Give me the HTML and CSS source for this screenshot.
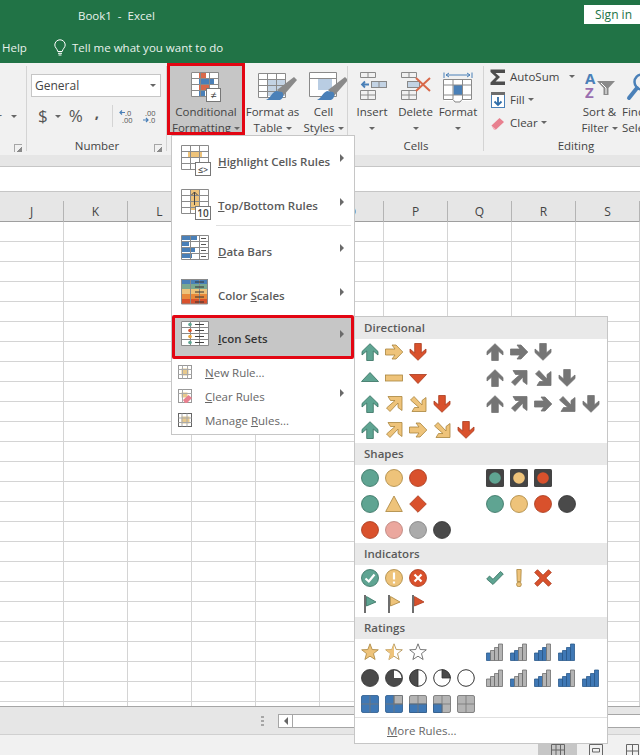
FILE: index.html
```html
<!DOCTYPE html>
<html lang="en">
<head>
<meta charset="utf-8">
<title>Book1 - Excel</title>
<link rel="stylesheet" href="styles.css">
</head>
<body>
<svg class="defs" aria-hidden="true">
  <symbol id="up" viewBox="0 0 18 18"><path d="M9 .7 17 8.500V12L12.300 8V17.500H5.700V8L1 12V8.500Z"/></symbol>
  <symbol id="right" viewBox="0 0 18 18"><path d="M.5 6H10L7 2H11L17.800 9 11 16H7L10 12H.5Z"/></symbol>
  <symbol id="ne" viewBox="0 0 18 18"><path d="M3 1.500H17V15.500L13 12.500V8L5 16.500 1.500 13 10 5.500H5.500Z"/></symbol>
  <symbol id="se" viewBox="0 0 18 18"><path d="M3 16.500H17V2.500L13 5.500V10L5 1.500 1.500 5 10 12.500H5.500Z"/></symbol>
  <symbol id="tri-up" viewBox="0 0 18 18"><path d="M9 3.500 17.500 12.500H.5Z"/></symbol>
  <symbol id="tri-dn" viewBox="0 0 18 18"><path d="M.5 5.500H17.500L9 14.500Z"/></symbol>
  <symbol id="dash" viewBox="0 0 18 18"><rect x=".5" y="6" width="17" height="6"/></symbol>
  <symbol id="circ" viewBox="0 0 18 18"><circle cx="9" cy="9" r="8.500"/></symbol>
  <symbol id="tri" viewBox="0 0 18 18"><path d="M9 1 17.300 16.500H.7Z"/></symbol>
  <symbol id="dia" viewBox="0 0 18 18"><path d="M9 .7 17.300 9 9 17.300 .7 9Z"/></symbol>
  <symbol id="light" viewBox="0 0 18 18"><rect width="18" height="18" rx="1.500" class="k-dark"/><circle cx="9" cy="9" r="5.800"/></symbol>
  <symbol id="ok" viewBox="0 0 18 18"><circle cx="9" cy="9" r="8.500"/><path d="M4.500 9.500 7.800 12.500 13.500 5.500" class="k-mark"/></symbol>
  <symbol id="bang" viewBox="0 0 18 18"><circle cx="9" cy="9" r="8.500"/><path d="M9 3.500V10.500M9 12.500V14.500" class="k-mark"/></symbol>
  <symbol id="no" viewBox="0 0 18 18"><circle cx="9" cy="9" r="8.500"/><path d="M5.500 5.500 12.500 12.500M12.500 5.500 5.500 12.500" class="k-mark"/></symbol>
  <symbol id="check" viewBox="0 0 18 18"><path d="M.7 10 3.500 7 7 10.300 14.500 2.500 17.300 5 7 15.500Z"/></symbol>
  <symbol id="excl" viewBox="0 0 18 18"><path d="M6.800 .5H11.200L10.800 12.500H7.200ZM9 13A2.400 2.400 0 1 1 8.900 17.800 2.400 2.400 0 0 1 9 13Z"/></symbol>
  <symbol id="cross" viewBox="0 0 18 18"><path d="M3.500.7 9 6.200 14.500.7 17.300 3.500 11.800 9 17.300 14.500 14.500 17.300 9 11.800 3.500 17.300.7 14.500 6.200 9 .7 3.500Z"/></symbol>
  <symbol id="flag" viewBox="0 0 18 18"><rect x="3" y="0" width="2" height="18" class="k-pole"/><path d="M5.500 1.500 15 7 5.500 11Z"/></symbol>
  <symbol id="star" viewBox="0 0 18 18"><path d="M9 .8 11.200 6.500 17.300 6.800 12.500 10.600 14.100 16.500 9 13.200 3.900 16.500 5.500 10.600 .7 6.800 6.800 6.500Z"/></symbol>
  <symbol id="star-h" viewBox="0 0 18 18"><path class="k-white" d="M9 .8 11.200 6.500 17.300 6.800 12.500 10.600 14.100 16.500 9 13.200 3.900 16.500 5.500 10.600 .7 6.800 6.800 6.500Z"/><path class="k-noline" d="M9 .8 6.800 6.500 .7 6.800 5.500 10.600 3.900 16.500 9 13.200Z"/></symbol>
  <symbol id="p4" viewBox="0 0 18 18"><circle cx="9" cy="9" r="8.500" class="k-pie"/></symbol>
  <symbol id="p3" viewBox="0 0 18 18"><circle cx="9" cy="9" r="8.500" class="k-pie"/><path d="M9 9V1.500A7.500 7.500 0 0 1 16.500 9Z" class="k-whitefill"/></symbol>
  <symbol id="p2" viewBox="0 0 18 18"><circle cx="9" cy="9" r="8.300" class="k-ring"/><path d="M9 .7A8.300 8.300 0 0 0 9 17.300Z" class="k-pie"/></symbol>
  <symbol id="p1" viewBox="0 0 18 18"><circle cx="9" cy="9" r="8.300" class="k-ring"/><path d="M9 9V.7A8.300 8.300 0 0 1 17.300 9Z" class="k-pie"/></symbol>
  <symbol id="p0" viewBox="0 0 18 18"><circle cx="9" cy="9" r="8.300" class="k-ring"/></symbol>
  <symbol id="b0" viewBox="0 0 18 18"><path class="k-off" d="M.5 10H4.500V17.500H.5ZM4.500 7.500H8.500V17.500H4.500ZM8.500 4.500H12.500V17.500H8.500ZM12.500 1H16.500V17.500H12.500Z"/></symbol>
  <symbol id="b1" viewBox="0 0 18 18"><path class="k-on" d="M.5 10H4.500V17.500H.5Z"/><path class="k-off" d="M4.500 7.500H8.500V17.500H4.500ZM8.500 4.500H12.500V17.500H8.500ZM12.500 1H16.500V17.500H12.500Z"/></symbol>
  <symbol id="b2" viewBox="0 0 18 18"><path class="k-on" d="M.5 10H4.500V17.500H.5ZM4.500 7.500H8.500V17.500H4.500Z"/><path class="k-off" d="M8.500 4.500H12.500V17.500H8.500ZM12.500 1H16.500V17.500H12.500Z"/></symbol>
  <symbol id="b3" viewBox="0 0 18 18"><path class="k-on" d="M.5 10H4.500V17.500H.5ZM4.500 7.500H8.500V17.500H4.500ZM8.500 4.500H12.500V17.500H8.500Z"/><path class="k-off" d="M12.500 1H16.500V17.500H12.500Z"/></symbol>
  <symbol id="b4" viewBox="0 0 18 18"><path class="k-on" d="M.5 10H4.500V17.500H.5ZM4.500 7.500H8.500V17.500H4.500ZM8.500 4.500H12.500V17.500H8.500ZM12.500 1H16.500V17.500H12.500Z"/></symbol>
  <symbol id="q4" viewBox="0 0 18 18"><rect x=".5" y=".5" width="17" height="17" rx="1.500" class="k-on"/><path d="M9 .5V17.500M.5 9H17.500" class="k-qline"/></symbol>
  <symbol id="q3" viewBox="0 0 18 18"><rect x=".5" y=".5" width="17" height="17" rx="1.500" class="k-on"/><path d="M9 .5H17.500V9H9Z" class="k-offf"/><path d="M9 .5V17.500M.5 9H17.500" class="k-qline"/></symbol>
  <symbol id="q2" viewBox="0 0 18 18"><rect x=".5" y=".5" width="17" height="17" rx="1.500" class="k-offf"/><path d="M.5 9H17.500V17.500H.5Z" class="k-on"/><path d="M9 .5V17.500M.5 9H17.500" class="k-qline"/></symbol>
  <symbol id="q1" viewBox="0 0 18 18"><rect x=".5" y=".5" width="17" height="17" rx="1.500" class="k-offf"/><path d="M.5 9H9V17.500H.5Z" class="k-on"/><path d="M9 .5V17.500M.5 9H17.500" class="k-qline"/></symbol>
  <symbol id="q0" viewBox="0 0 18 18"><rect x=".5" y=".5" width="17" height="17" rx="1.500" class="k-offf"/><path d="M9 .5V17.500M.5 9H17.500" class="k-qline"/></symbol>
  <symbol id="grid" viewBox="0 0 30 32"><path class="k-grid" d="M.5.5H27.500V24.500H.5ZM9.500.5V24.500M18.500.5V24.500M.5 6.500H27.500M.5 12.500H27.500M.5 18.500H27.500"/></symbol>
  <symbol id="brush" viewBox="0 0 42 32"><path d="M19 18 36 5 39 8 25 24Z" fill="#8a8a8a"/><path d="M18 19C13 21 13 26 8 28H22C26 26 26 22 24 20Z" fill="#4a80b8"/></symbol>
</svg>

<div class="app">
  <header class="titlebar">
    <div class="title-row">
      <span class="doc-title">Book1 &nbsp;-&nbsp; Excel</span>
      <span class="signin">Sign in</span>
    </div>
    <div class="tell-row">
      <span class="help">Help</span>
      <svg class="bulb" viewBox="0 0 12 17"><path d="M6 .8A5.200 5.200 0 0 0 .8 6C.8 8.500 3.300 9.800 3.800 12.500H8.200C8.700 9.800 11.200 8.500 11.200 6A5.200 5.200 0 0 0 6 .8ZM4 14.300H8M4.500 16H7.500" fill="none" stroke="#fff"/></svg>
      <span class="tell">Tell me what you want to do</span>
    </div>
  </header>

  <section class="ribbon">
    <div class="group g-stub">
      <div class="stub-row"><span class="stub-r">r</span><i class="caret"></i></div>
      <i class="launcher"></i>
    </div>

    <div class="group g-number">
      <div class="combo"><span>General</span><i class="caret"></i></div>
      <div class="num-row">
        <span class="sym dollar">$</span><i class="caret"></i>
        <span class="sym pct">%</span>
        <span class="sym comma">,</span>
        <span class="num-sep"></span>
        <svg class="dec" viewBox="0 0 16 16"><text x="6" y="7.500" class="dec-t">.0</text><text x="3" y="15" class="dec-t">.00</text><path d="M1 4.500H6M3 2.500 1 4.500 3 6.500" class="dec-a"/></svg>
        <svg class="dec" viewBox="0 0 16 16"><text x="3" y="7.500" class="dec-t">.00</text><text x="7" y="15" class="dec-t">.0</text><path d="M1 12H6M4 10 6 12 4 14" class="dec-a"/></svg>
      </div>
      <div class="group-label">Number</div>
      <i class="launcher"></i>
    </div>

    <div class="group g-styles">
      <div class="cmd cmd-cf">
        <svg class="cmd-ic" viewBox="0 0 30 32">
          <rect x="0" y="0" width="27" height="24" fill="#fff"/>
          <rect x="8" y="0" width="7" height="6" fill="#d9694a"/><rect x="8" y="6" width="15" height="6" fill="#4a80b8"/><rect x="8" y="12" width="11" height="6" fill="#d9694a"/><rect x="8" y="18" width="6" height="6" fill="#4a80b8"/>
          <use href="#grid"/>
          <rect x="15.500" y="16.500" width="14" height="13" fill="#fff" stroke="#777"/>
          <text x="22.500" y="27" class="badge-t">≠</text>
        </svg>
        <span>Conditional</span>
        <span>Formatting<i class="caret c-in"></i></span>
      </div>
      <div class="cmd cmd-fat">
        <svg class="cmd-ic wide" viewBox="0 0 42 32">
          <rect x="0" y="1" width="27" height="24" fill="#fff"/>
          <rect x="9" y="7" width="18" height="17" fill="#c3d3e4"/>
          <path class="k-grid" d="M.5 1.500H27.500V25.500H.5ZM9.500 1.500V25.500M18.500 1.500V25.500M.5 7.500H27.500M.5 13.500H27.500M.5 19.500H27.500"/>
          <use href="#brush" x="0" y="0" width="42" height="32"/>
        </svg>
        <span>Format as</span>
        <span>Table<i class="caret c-in"></i></span>
      </div>
      <div class="cmd cmd-cs">
        <svg class="cmd-ic wide" viewBox="0 0 42 32">
          <rect x="0" y="0" width="27" height="24" fill="#fff"/>
          <rect x="9" y="6" width="14" height="12" fill="#b9cde3"/>
          <path class="k-grid" d="M.5.5H27.500V24.500H.5ZM.5 6.500H27.500"/>
          <use href="#brush" x="0" y="0" width="42" height="32"/>
        </svg>
        <span>Cell</span>
        <span>Styles<i class="caret c-in"></i></span>
      </div>
    </div>

    <div class="group g-cells">
      <div class="cmd-row">
        <div class="cmd cmd-ins">
          <svg class="cmd-ic" viewBox="0 0 30 32">
            <path class="k-grid" d="M.5 .5H15.500V5.500H.5ZM8 .5V5.500M.5 18.500H15.500V27.500H.5ZM8 18.500V27.500M.5 23H15.500"/>
            <rect x="11.500" y="9.500" width="15" height="6" fill="#c3d3e4" stroke="#888"/>
            <path d="M19 9.500V15.500" stroke="#888"/>
            <path d="M2 12.500H9M5 9.500 2 12.500 5 15.500" fill="none" stroke="#4a80b8" stroke-width="1.800"/>
          </svg>
          <span>Insert</span>
          <span class="caret-line"><i class="caret"></i></span>
        </div>
        <div class="cmd cmd-del">
          <svg class="cmd-ic" viewBox="0 0 30 32">
            <path class="k-grid" d="M.5 .5H15.500V5.500H.5ZM8 .5V5.500M.5 18.500H15.500V27.500H.5ZM8 18.500V27.500M.5 23H15.500"/>
            <rect x="6.500" y="9.500" width="12" height="6" fill="#c3d3e4" stroke="#888"/>
            <path d="M15 6 29 19M29 6 15 19" stroke="#d9694a" stroke-width="2" fill="none"/>
          </svg>
          <span>Delete</span>
          <span class="caret-line"><i class="caret"></i></span>
        </div>
        <div class="cmd cmd-fmt">
          <svg class="cmd-ic" viewBox="0 0 30 32">
            <path d="M1 .5V6M29 .5V6M3 3H27M6 1 3 3 6 5M24 1 27 3 24 5" fill="none" stroke="#4a80b8"/>
            <rect x="1" y="8" width="28" height="21" fill="#fff"/>
            <rect x="10.500" y="13" width="9" height="10" fill="#4a80b8"/>
            <path class="k-grid" d="M.5 7.500H28.500V27.500L19 27.500 17 30H12L10 27.500H.5ZM10 7.500V27M19.500 7.500V27M.5 13H28.500M.5 23H28.500"/>
          </svg>
          <span>Format</span>
          <span class="caret-line"><i class="caret"></i></span>
        </div>
      </div>
      <div class="group-label">Cells</div>
    </div>

    <div class="group g-edit">
      <div class="cmd-row">
        <div class="edit-list">
          <div class="edit-row e-sum">
            <svg class="e-ic" viewBox="0 0 16 16"><path d="M.5.500H15V4H5.500L10 8 5.500 12.500H15V16H.5V13.500L6 8 .5 3Z" fill="#4d4d4d"/></svg>
            <span>AutoSum</span><i class="caret c-far"></i>
          </div>
          <div class="edit-row">
            <svg class="e-ic" viewBox="0 0 16 16"><rect x="1.500" y=".5" width="13" height="15" fill="#fff" stroke="#4a80b8"/><rect x="1" y="0" width="14" height="3" fill="#6d6d6d"/><path d="M8 5V13M4.500 9.500 8 13 11.500 9.500" fill="none" stroke="#2e6ca8" stroke-width="1.800"/></svg>
            <span>Fill</span><i class="caret c-in"></i>
          </div>
          <div class="edit-row">
            <svg class="e-ic" viewBox="0 0 16 16"><path d="M1.500 10.500 9.500 3 14 7 6 14.500H4Z" fill="#e8808f"/><path d="M1.500 10.500 6 14.500H4Z" fill="#f5c0c8"/></svg>
            <span>Clear</span><i class="caret c-in"></i>
          </div>
        </div>
        <div class="cmd cmd-sort">
          <svg class="cmd-ic" viewBox="0 0 30 32">
            <text x="0" y="12" class="az az-a">A</text>
            <text x="0" y="26" class="az az-z">Z</text>
            <path d="M12 9H30L23.500 16V23H18.500V16Z" fill="#8a8a8a"/><path d="M16 11 21 16V22" fill="none" stroke="#fff"/>
          </svg>
          <span>Sort &amp;</span>
          <span>Filter<i class="caret c-in"></i></span>
        </div>
        <div class="cmd cmd-find">
          <svg class="cmd-ic" viewBox="0 0 30 32">
            <circle cx="20" cy="10" r="7.500" fill="none" stroke="#4a80b8" stroke-width="2.500"/>
            <path d="M15 16 7 26" stroke="#4a80b8" stroke-width="4" stroke-linecap="round"/>
          </svg>
          <span>Find &amp;</span>
          <span>Select</span>
        </div>
      </div>
      <div class="group-label">Editing</div>
    </div>
  </section>

  <div class="ribbon-gap"></div>
  <div class="formula"></div>

  <div class="colhead">
    <div class="col">J</div><div class="col">K</div><div class="col">L</div><div class="col"></div><div class="col"></div><div class="col">O</div><div class="col">P</div><div class="col">Q</div><div class="col">R</div><div class="col">S</div>
  </div>
  <div class="sheet"></div>

  <div class="hscroll">
    <span class="grip"></span>
    <span class="scroll-btn"><i class="tri-left"></i></span>
    <span class="scroll-track"></span>
  </div>
  <footer class="status">
    <span class="view view-on"><svg class="view-ic" viewBox="0 0 14 12"><path d="M.5.500H13.500V11.500H.5ZM5 .5V11.500M9.500 .5V11.500M.5 6H13.500" fill="none" stroke="#666"/></svg></span>
    <span class="view view-page"><svg class="view-ic" viewBox="0 0 14 12"><path d="M.5.500H13.500V11.500H.5ZM3.500 4.500H10.500V8H3.500Z" fill="none" stroke="#666"/></svg></span>
    <span class="view view-brk"><svg class="view-ic" viewBox="0 0 14 12"><path d="M.5.500H12.500V11.500H.5ZM6.500 .5V11.500M.5 7H12.500" fill="none" stroke="#666"/></svg></span>
  </footer>

  <nav class="menu">
    <div class="mi-lg">
      <svg class="mi-ic" viewBox="0 0 30 32"><rect width="27" height="24" fill="#fff"/><rect x="7" y="6" width="14" height="6" fill="#eec37a"/><use href="#grid"/><rect x="14.500" y="17.500" width="15" height="13" fill="#fff" stroke="#777"/><text x="22" y="27.500" class="badge-s">≤&gt;</text></svg>
      <span class="mi-t"><u>H</u>ighlight Cells Rules</span><i class="sub-arrow"></i>
    </div>
    <div class="mi-lg">
      <svg class="mi-ic" viewBox="0 0 30 32"><rect width="27" height="24" fill="#fff"/><rect x="9" y="0" width="9" height="21" fill="#eec37a"/><use href="#grid"/><path d="M13.500 16V3M10.500 6 13.500 3 16.500 6" fill="none" stroke="#444"/><rect x="14.500" y="17.500" width="15" height="13" fill="#fff" stroke="#777"/><text x="22" y="28" class="badge-n">10</text></svg>
      <span class="mi-t"><u>T</u>op/Bottom Rules</span><i class="sub-arrow"></i>
    </div>
    <div class="mi-sep"></div>
    <div class="mi-lg">
      <svg class="mi-ic" viewBox="0 0 30 32"><rect width="27" height="24" fill="#fff"/><rect x="0" y="1" width="16" height="4" fill="#4a80b8"/><rect x="0" y="6" width="8" height="5" fill="#4a80b8"/><rect x="0" y="12" width="14" height="5" fill="#4a80b8"/><rect x="0" y="18" width="11" height="5" fill="#4a80b8"/><use href="#grid"/><path d="M20 3.500H25M20 9.500H25M20 15.500H25M20 21.500H25" stroke="#555"/></svg>
      <span class="mi-t"><u>D</u>ata Bars</span><i class="sub-arrow"></i>
    </div>
    <div class="mi-lg">
      <svg class="mi-ic" viewBox="0 0 30 32"><rect y="0" width="27" height="5" fill="#4a80b8"/><rect y="5" width="27" height="5" fill="#7aa890"/><rect y="10" width="27" height="5" fill="#eec37a"/><rect y="15" width="27" height="5" fill="#e8883a"/><rect y="20" width="27" height="5" fill="#d9512c"/><path class="k-grid" d="M.5.500H26.500V25H.5ZM9.500.5V25M18.500.5V25"/><path d="M14 3H23M14 8H23M14 13H23M14 18H23M14 23H23" stroke="#333"/></svg>
      <span class="mi-t">Color <u>S</u>cales</span><i class="sub-arrow"></i>
    </div>
    <div class="mi-lg mi-on">
      <svg class="mi-ic" viewBox="0 0 30 32"><rect width="27" height="24" fill="#fff"/><use href="#grid"/><circle cx="9" cy="3.500" r="1.800" fill="#5fa492"/><circle cx="9" cy="9.500" r="1.800" fill="#d9512c"/><circle cx="9" cy="15.500" r="1.800" fill="#e8a53a"/><circle cx="9" cy="21.500" r="1.800" fill="#5fa492"/><path d="M14 3.500H23M14 9.500H23M14 15.500H23M14 21.500H23" stroke="#444"/></svg>
      <span class="mi-t"><u>I</u>con Sets</span><i class="sub-arrow"></i>
    </div>
    <div class="mi-sm">
      <svg class="mi-ic-s" viewBox="0 0 14 14"><rect x=".5" y=".5" width="13" height="13" fill="#fff" stroke="#999"/><rect x="3.500" y="3.500" width="7" height="7" fill="#e8c98c"/><path d="M.5 4.500H13.500M.5 9.500H13.500M4.500 .5V13.500M9.500 .5V13.500" stroke="#aaa" fill="none"/></svg>
      <span><u>N</u>ew Rule...</span>
    </div>
    <div class="mi-sm">
      <svg class="mi-ic-s" viewBox="0 0 14 14"><rect x=".5" y=".5" width="13" height="13" fill="#fff" stroke="#999"/><rect x="3.500" y="3.500" width="6" height="5" fill="#e8c98c"/><path d="M.5 4.500H13.500M4.500 .5V13.500" stroke="#aaa" fill="none"/><path d="M5 11 10.500 6 14 9 9 14H7Z" fill="#e8808f"/></svg>
      <span><u>C</u>lear Rules</span><i class="sub-arrow"></i>
    </div>
    <div class="mi-sm">
      <svg class="mi-ic-s" viewBox="0 0 14 14"><rect x=".5" y=".5" width="13" height="13" fill="#fff" stroke="#666"/><rect x="3.500" y="3.500" width="8" height="7" fill="#e8c98c"/><path d="M.5 5H13.500M.5 9.500H13.500M4 .5V13.500M9 .5V13.500" stroke="#aaa" fill="none"/></svg>
      <span>Manage <u>R</u>ules...</span>
    </div>
  </nav>

  <aside class="iconsets">
    <h3 class="is-head">Directional</h3>
    <div class="is-row">
      <div class="is-set">
        <svg class="ic green"><use href="#up"/></svg><svg class="ic yellow"><use href="#right"/></svg><svg class="ic red flip"><use href="#up"/></svg>
      </div>
      <div class="is-set">
        <svg class="ic gray"><use href="#up"/></svg><svg class="ic gray"><use href="#right"/></svg><svg class="ic gray flip"><use href="#up"/></svg>
      </div>
    </div>
    <div class="is-row">
      <div class="is-set">
        <svg class="ic green"><use href="#tri-up"/></svg><svg class="ic yellow"><use href="#dash"/></svg><svg class="ic red"><use href="#tri-dn"/></svg>
      </div>
      <div class="is-set">
        <svg class="ic gray"><use href="#up"/></svg><svg class="ic gray"><use href="#ne"/></svg><svg class="ic gray"><use href="#se"/></svg><svg class="ic gray flip"><use href="#up"/></svg>
      </div>
    </div>
    <div class="is-row">
      <div class="is-set">
        <svg class="ic green"><use href="#up"/></svg><svg class="ic yellow"><use href="#ne"/></svg><svg class="ic yellow"><use href="#se"/></svg><svg class="ic red flip"><use href="#up"/></svg>
      </div>
      <div class="is-set">
        <svg class="ic gray"><use href="#up"/></svg><svg class="ic gray"><use href="#ne"/></svg><svg class="ic gray"><use href="#right"/></svg><svg class="ic gray"><use href="#se"/></svg><svg class="ic gray flip"><use href="#up"/></svg>
      </div>
    </div>
    <div class="is-row">
      <div class="is-set">
        <svg class="ic green"><use href="#up"/></svg><svg class="ic yellow"><use href="#ne"/></svg><svg class="ic yellow"><use href="#right"/></svg><svg class="ic yellow"><use href="#se"/></svg><svg class="ic red flip"><use href="#up"/></svg>
      </div>
    </div>

    <h3 class="is-head">Shapes</h3>
    <div class="is-row">
      <div class="is-set">
        <svg class="ic green"><use href="#circ"/></svg><svg class="ic yellow"><use href="#circ"/></svg><svg class="ic red"><use href="#circ"/></svg>
      </div>
      <div class="is-set">
        <svg class="ic lamp-g"><use href="#light"/></svg><svg class="ic lamp-y"><use href="#light"/></svg><svg class="ic lamp-r"><use href="#light"/></svg>
      </div>
    </div>
    <div class="is-row">
      <div class="is-set">
        <svg class="ic green"><use href="#circ"/></svg><svg class="ic yellow"><use href="#tri"/></svg><svg class="ic red"><use href="#dia"/></svg>
      </div>
      <div class="is-set">
        <svg class="ic green"><use href="#circ"/></svg><svg class="ic yellow"><use href="#circ"/></svg><svg class="ic red"><use href="#circ"/></svg><svg class="ic dark"><use href="#circ"/></svg>
      </div>
    </div>
    <div class="is-row">
      <div class="is-set">
        <svg class="ic red"><use href="#circ"/></svg><svg class="ic pink"><use href="#circ"/></svg><svg class="ic silver"><use href="#circ"/></svg><svg class="ic dark"><use href="#circ"/></svg>
      </div>
    </div>

    <h3 class="is-head">Indicators</h3>
    <div class="is-row">
      <div class="is-set">
        <svg class="ic green"><use href="#ok"/></svg><svg class="ic yellow"><use href="#bang"/></svg><svg class="ic red"><use href="#no"/></svg>
      </div>
      <div class="is-set">
        <svg class="ic green"><use href="#check"/></svg><svg class="ic yellow"><use href="#excl"/></svg><svg class="ic red"><use href="#cross"/></svg>
      </div>
    </div>
    <div class="is-row">
      <div class="is-set">
        <svg class="ic green"><use href="#flag"/></svg><svg class="ic yellow"><use href="#flag"/></svg><svg class="ic red"><use href="#flag"/></svg>
      </div>
    </div>

    <h3 class="is-head">Ratings</h3>
    <div class="is-row">
      <div class="is-set">
        <svg class="ic yellow"><use href="#star"/></svg><svg class="ic yellow"><use href="#star-h"/></svg><svg class="ic hollow"><use href="#star"/></svg>
      </div>
      <div class="is-set">
        <svg class="ic"><use href="#b1"/></svg><svg class="ic"><use href="#b2"/></svg><svg class="ic"><use href="#b3"/></svg><svg class="ic"><use href="#b4"/></svg>
      </div>
    </div>
    <div class="is-row">
      <div class="is-set">
        <svg class="ic"><use href="#p4"/></svg><svg class="ic"><use href="#p3"/></svg><svg class="ic"><use href="#p2"/></svg><svg class="ic"><use href="#p1"/></svg><svg class="ic"><use href="#p0"/></svg>
      </div>
      <div class="is-set">
        <svg class="ic"><use href="#b0"/></svg><svg class="ic"><use href="#b1"/></svg><svg class="ic"><use href="#b2"/></svg><svg class="ic"><use href="#b3"/></svg><svg class="ic"><use href="#b4"/></svg>
      </div>
    </div>
    <div class="is-row">
      <div class="is-set">
        <svg class="ic"><use href="#q4"/></svg><svg class="ic"><use href="#q3"/></svg><svg class="ic"><use href="#q2"/></svg><svg class="ic"><use href="#q1"/></svg><svg class="ic"><use href="#q0"/></svg>
      </div>
    </div>
    <div class="is-more"><span><u>M</u>ore Rules...</span></div>
  </aside>
</div>
</body>
</html>
```

FILE: styles.css
```css
* { box-sizing: border-box; }
html, body { margin: 0; padding: 0; }
body { font-family: "Open Sans", "Noto Sans", sans-serif; font-size: 11.5px; color: #444; background: #fff; }
.defs { position: absolute; width: 0; height: 0; overflow: hidden; }
.app { position: relative; width: 640px; height: 755px; overflow: hidden; display: flex; flex-direction: column; }
i { display: block; font-style: normal; }

/* title bar */
.titlebar { height: 63px; background: #217346; color: #e9f2ed; flex: none; }
.title-row { height: 31px; padding-left: 78px; display: flex; align-items: flex-start; justify-content: space-between; }
.doc-title { margin-top: 8px; line-height: 16px; }
.signin { width: 56px; height: 19px; margin-top: 5px; background: #fff; color: #217346; line-height: 19px; padding-left: 11px; font-size: 12px; }
.tell-row { height: 32px; display: flex; align-items: center; padding-left: 2px; }
.help { width: 52px; }
.bulb { width: 12px; height: 17px; margin-right: 6px; }

/* ribbon */
.ribbon { height: 92px; flex: none; display: flex; background: #f1f1f1; overflow: hidden; }
.group { position: relative; flex: none; height: 100%; }
.group::after { content: ""; position: absolute; right: 0; top: 3px; height: 85px; width: 1px; background: #d4d4d4; }
.group-label { position: absolute; left: 0; right: 0; top: 75px; text-align: center; line-height: 16px; }
.launcher { position: absolute; right: 5px; bottom: 3px; width: 8px; height: 8px; border-left: 1px solid #a6a6a6; border-top: 1px solid #a6a6a6; background: linear-gradient(135deg, transparent 60%, #8a8a8a 60%); }
.caret { width: 0; height: 0; border-left: 3.5px solid transparent; border-right: 3.5px solid transparent; border-top: 3.5px solid #666; }
.c-in { display: inline-block; margin-left: 3px; vertical-align: 2px; }
.c-far { margin-left: auto; margin-right: 6px; }

.g-stub { width: 27px; }
.stub-row { display: flex; align-items: center; height: 16px; margin-top: 45px; padding-left: 11px; }
.stub-r { margin-left: -14px; width: 3px; margin-right: 11px; }
.g-stub .launcher { right: 5px; }

.g-number { width: 140px; padding: 11px 0 0 4px; }
.combo { width: 130px; height: 23px; background: #fff; border: 1px solid #c6c6c6; display: flex; align-items: center; justify-content: space-between; padding: 0 4px 0 3px; font-size: 12px; }
.num-row { display: flex; align-items: center; height: 24px; margin-top: 7px; padding-left: 7px; }
.sym { color: #555; font-size: 17px; line-height: 24px; }
.dollar { margin-right: 7px; }
.pct { margin-left: 8px; }
.comma { margin-left: 12px; font-weight: 700; font-size: 15px; margin-top: -9px; }
.num-sep { width: 1px; height: 22px; background: #d4d4d4; margin: 0 6px 0 13px; }
.dec { width: 16px; height: 16px; margin-right: 7px; flex: none; }
.dec-t { font-size: 7.500px; fill: #555; }
.dec-a { fill: none; stroke: #4a80b8; stroke-width: 1.200; }

.g-styles { width: 181px; display: flex; }
.cmd { display: flex; flex-direction: column; align-items: center; line-height: 16px; padding-top: 9px; flex: none; white-space: nowrap; }
.cmd > span { height: 16px; }
.cmd-ic { width: 30px; height: 32px; display: block; flex: none; }
.cmd-ic.wide { width: 42px; margin-left: 12px; }
.cmd-cf { width: 78px; height: 72px; background: #c6c6c6; border: 3px solid #e30613; padding-top: 6px; overflow: hidden; }
.cmd-fat { width: 55px; }
.cmd-cs { width: 47px; }
.badge-t { font-size: 11px; fill: #444; text-anchor: middle; }
.badge-s { font-size: 9px; fill: #444; text-anchor: middle; }
.badge-n { font-size: 10px; fill: #444; text-anchor: middle; }

.g-cells { width: 136px; }
.cmd-row { display: flex; }
.cmd-ins { width: 47px; padding-left: 1px; }
.cmd-ins .cmd-ic { margin-left: 6px; }
.cmd-del { width: 41px; }
.cmd-fmt { width: 44px; }
.caret-line { display: flex; align-items: center; }
.g-edit { width: 184px; }
.g-edit::after { display: none; }
.edit-list { width: 97px; padding: 2px 0 0 6px; }
.edit-row { height: 23px; display: flex; align-items: center; }
.e-ic { width: 16px; height: 16px; margin-right: 4px; flex: none; }
.cmd-sort { width: 37px; }
.cmd-find { width: 40px; align-items: flex-start; margin-left: 4px; }
.az { font-size: 15px; font-weight: 700; }
.az-a { fill: #4a80b8; }
.az-z { fill: #9a6fb0; }

/* below ribbon */
.ribbon-gap { height: 11px; background: #e6e6e6; flex: none; }
.formula { height: 25px; background: #fff; border-top: 1px solid #c6c6c6; flex: none; }
.colhead { height: 31px; flex: none; display: flex; padding-top: 9px; background: #e6e6e6; border-top: 1px solid #c6c6c6; border-bottom: 1px solid #9f9f9f; }
.col { width: 64px; flex: none; height: 21px; line-height: 21px; text-align: center; border-right: 1px solid #b4b4b4; font-size: 12px; }
.sheet { flex: none; height: 484px; background-color: #fff; background-image: linear-gradient(to right, transparent 63px, #d4d4d4 63px), linear-gradient(to bottom, transparent 19px, #d4d4d4 19px); background-size: 64px 20px; }

.hscroll { flex: none; height: 28px; background: #e6e6e6; border-top: 1px solid #a6a6a6; display: flex; align-items: center; padding-left: 261px; }
.grip { width: 3px; height: 11px; background: radial-gradient(circle, #a6a6a6 1.200px, transparent 1.500px) 0 0 / 3px 4px; margin-right: 14px; }
.scroll-btn { width: 15px; height: 14px; background: #fff; border: 1px solid #a6a6a6; display: flex; align-items: center; justify-content: center; }
.tri-left { border-top: 4px solid transparent; border-bottom: 4px solid transparent; border-right: 4px solid #666; }
.scroll-track { flex: 1; height: 14px; background: #fff; border-top: 1px solid #a6a6a6; border-bottom: 1px solid #a6a6a6; }
.status { flex: none; height: 21px; background: #f1f1f1; border-top: 1px solid #d0d0d0; display: flex; padding-left: 538px; }
.view { display: flex; justify-content: center; padding-top: 9px; }
.view-ic { width: 14px; height: 12px; }
.view-on { width: 39px; background: #c6c6c6; margin-top: 9px; padding-top: 0; }
.view-page { margin-left: 11px; width: 15px; }
.view-brk { margin-left: 23px; width: 14px; }

/* conditional formatting menu */
.menu { position: absolute; left: 171px; top: 135px; width: 184px; height: 300px; background: #fff; border: 1px solid #c6c6c6; padding-top: 3px; color: #5a5a5a; }
.mi-lg { height: 44px; display: flex; align-items: center; padding: 0 10px 0 9px; font-weight: 600; }
.mi-ic { width: 30px; height: 32px; flex: none; margin-right: 7px; }
.mi-t { padding-top: 1px; }
.sub-arrow { margin-left: auto; margin-bottom: 6px; border-top: 4px solid transparent; border-bottom: 4px solid transparent; border-left: 4px solid #6a6a6a; }
.mi-sep { height: 1px; background: #e0e0e0; margin: -2px 3px 3px 44px; }
.mi-on { margin: -2px 0 0 0; padding: 0 10px 0 6px; background: #c6c6c6; border: 3px solid #e30613; border-radius: 2px; color: #333; }
.mi-on .mi-t { padding-top: 3px; }
.mi-on .sub-arrow { margin-right: -3px; }
.mi-sm { height: 24px; display: flex; align-items: center; padding: 0 10px 0 6px; color: #666; }
.mi-on + .mi-sm { margin-top: 1px; }
.mi-ic-s { width: 14px; height: 14px; flex: none; margin-right: 13px; }

/* icon sets panel */
.iconsets { position: absolute; left: 354px; top: 316px; width: 254px; height: 428px; background: #fff; border: 1px solid #c6c6c6; }
.is-head { height: 22px; margin: 0; padding-left: 9px; background: #e9e9e9; font-size: 11.5px; font-weight: 600; color: #5a5a5a; line-height: 22px; }
.is-row { height: 26px; display: flex; padding-left: 3px; align-items: center; }
.is-set { display: flex; width: 125px; flex: none; }
.ic { width: 18px; height: 18px; margin: 0 3px; flex: none; stroke-width: .8; overflow: visible; }
.green { fill: #5fa492; stroke: #35705f; }
.yellow { fill: #eec37a; stroke: #a8843c; }
.red { fill: #d9512c; stroke: #a83a1c; }
.gray { fill: #757575; stroke: #757575; }
.dark { fill: #4a4a4a; stroke: #333; }
.pink { fill: #eba79e; stroke: #b77f77; }
.silver { fill: #ababab; stroke: #808080; }
.hollow { fill: #fff; stroke: #555; }
.flip { transform: rotate(180deg); }
.lamp-g { fill: #5fa492; stroke: none; }
.lamp-y { fill: #eec37a; stroke: none; }
.lamp-r { fill: #d9512c; stroke: none; }
.k-dark { fill: #444; stroke: none; }
.k-mark { fill: none; stroke: #fff; stroke-width: 2.2; }
.k-pole { fill: #6e6e6e; stroke: none; }
.k-white { fill: #fff; }
.k-noline { stroke: none; }
.k-pie { fill: #4a4a4a; stroke: #333; stroke-width: .8; }
.k-ring { fill: #fff; stroke: #333; stroke-width: 1; }
.k-whitefill { fill: #fff; stroke: none; }
.k-on { fill: #3f78b5; stroke: #2c5a8c; stroke-width: .8; }
.k-off { fill: #b4b4b4; stroke: #6e6e6e; stroke-width: .8; }
.k-offf { fill: #b4b4b4; stroke: #6e6e6e; stroke-width: .8; }
.k-qline { fill: none; stroke: #777; stroke-width: .8; }
.k-grid { fill: none; stroke: #8a8a8a; stroke-width: 1; }
.is-more { height: 27px; margin-top: 0; border-top: 1px solid #e0e0e0; padding: 5px 0 0 32px; color: #666; line-height: 16px; }
```
